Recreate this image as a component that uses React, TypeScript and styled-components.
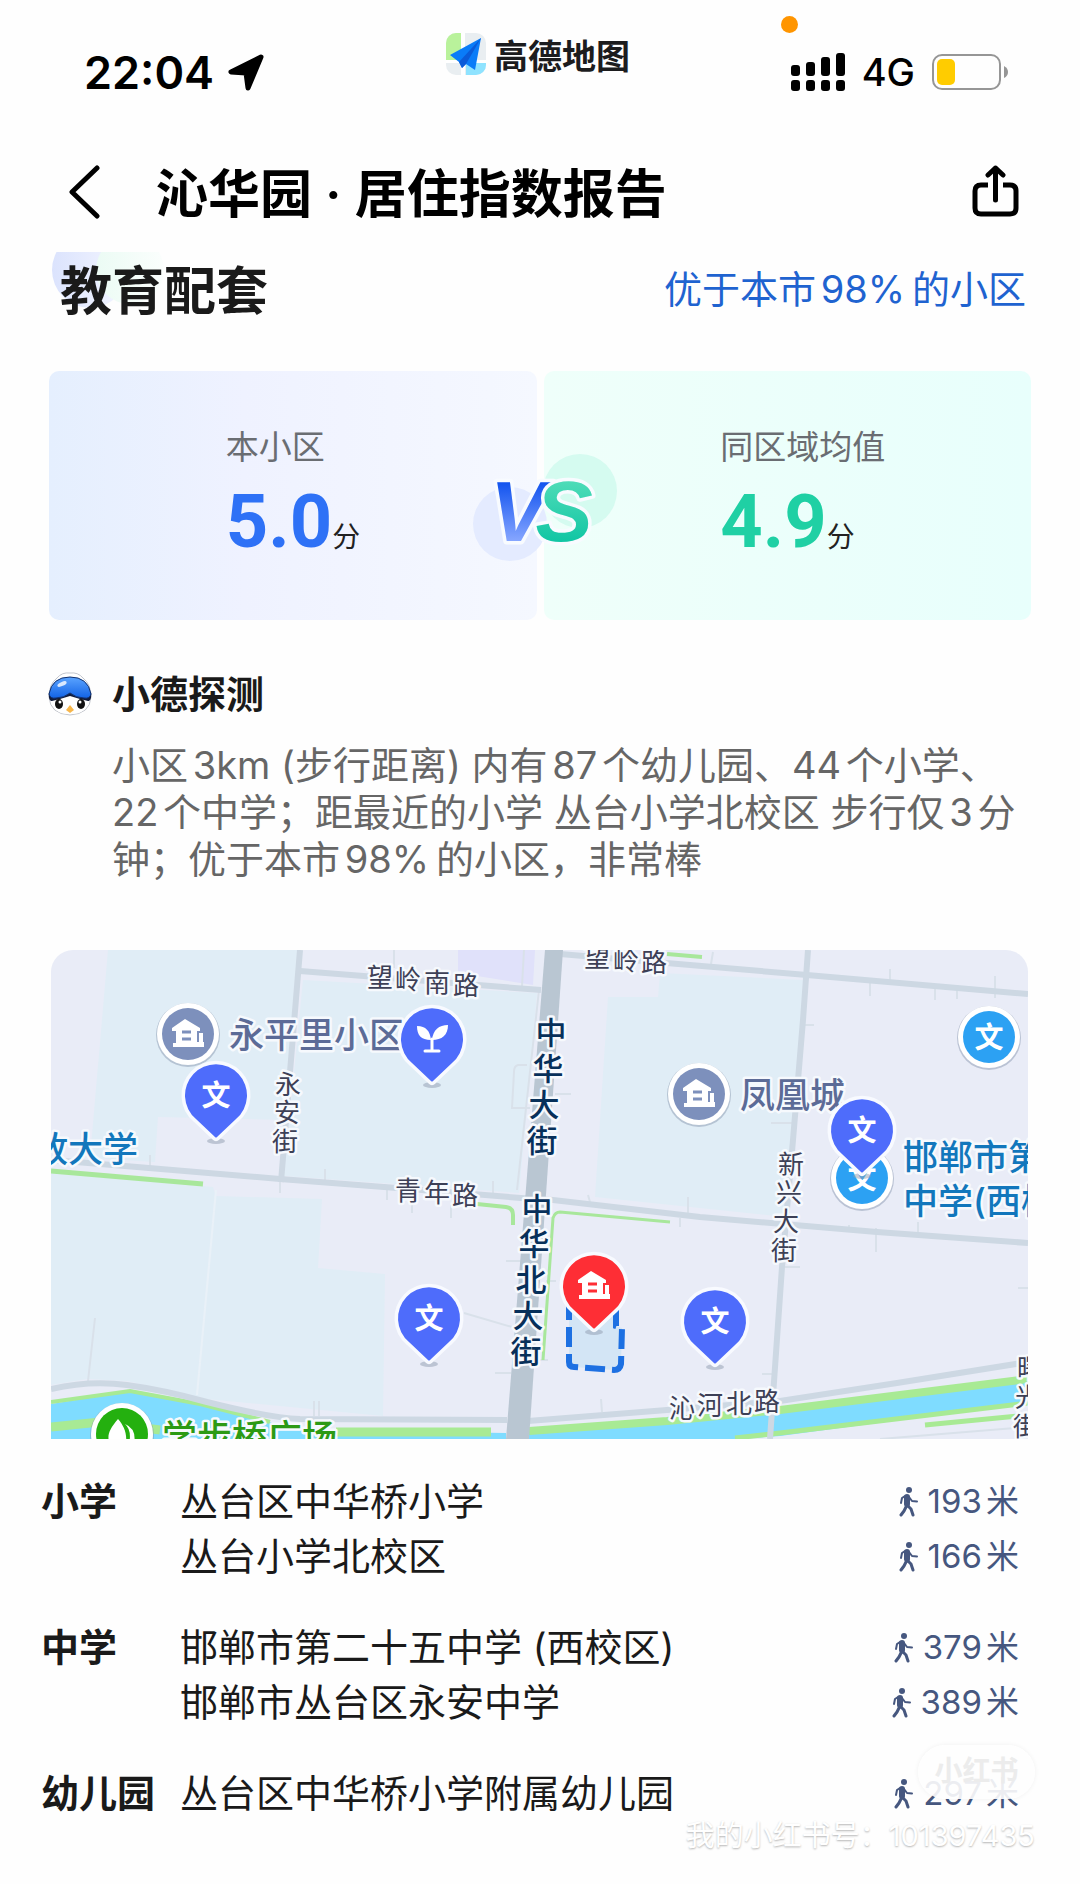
import React from "react";
import styled, { createGlobalStyle } from "styled-components";

const Global = createGlobalStyle`
  * { box-sizing: border-box; }
  body {
    margin: 0;
    background: #fefefe;
    color: #1a1a1a;
    font-family: Inter, "Noto Sans CJK SC", sans-serif;
    text-autospace: normal;
  }
  h1, h2, h3, p, ul { margin: 0; padding: 0; }
  button { font: inherit; color: inherit; border: 0; background: none; padding: 0; cursor: pointer; }
`;

const Page = styled.main`
  position: relative;
  width: 100%;
  padding-bottom: 62px;
  overflow: hidden;
`;

const StatusBar = styled.header`
  position: relative;
  display: grid;
  grid-template-columns: 1fr auto 1fr;
  align-items: center;
  height: 144px;
  padding: 0 72px;
  color: #000;
`;

const Clock = styled.div`
  display: flex;
  align-items: center;
  gap: 14px;
  margin-left: 12px;
  font-size: 45px;
  font-weight: 600;
`;

const Brand = styled.div`
  display: flex;
  align-items: center;
  align-self: start;
  gap: 8px;
  height: 40px;
  margin: 34px 4px 0 0;
  font-size: 34px;
  font-weight: 700;
  color: #1c1c1e;
`;

const Signals = styled.div`
  display: flex;
  align-items: center;
  justify-content: flex-end;
  gap: 17px;
  font-size: 38px;
  font-weight: 500;
`;

const MicDot = styled.span`
  position: absolute;
  top: 16px;
  right: 282px;
  width: 17px;
  height: 17px;
  border-radius: 50%;
  background: #ff9500;
`;

const NavBar = styled.nav`
  display: flex;
  align-items: center;
  height: 98px;
  padding: 0 60px 0 68px;
  color: #000;
`;

const IconButton = styled.button`
  display: flex;
  align-items: center;
`;

const PageTitle = styled.h1`
  flex: 1;
  margin-left: 56px;
  padding-top: 4px;
  font-size: 52px;
  font-weight: 600;
  line-height: 60px;
`;

const SectionHead = styled.div`
  position: relative;
  display: flex;
  align-items: flex-start;
  justify-content: space-between;
  height: 80px;
  margin-top: 10px;
  padding: 0 54px 0 60px;
`;

const HeadGlow = styled.svg`
  position: absolute;
  left: 52px;
  top: 0;
`;

const SectionTitle = styled.h2`
  position: relative;
  font-size: 52px;
  font-weight: 600;
  line-height: 80px;
`;

const RankLink = styled.a`
  font-size: 38px;
  line-height: 74px;
  color: #1f63d0;
  text-decoration: none;
`;

const Versus = styled.section`
  position: relative;
  display: grid;
  grid-template-columns: 1fr 1fr;
  gap: 7px;
  margin: 39px 49px 0;
`;

const ScoreCard = styled.div<{ $side: "own" | "area" }>`
  display: flex;
  justify-content: center;
  height: 249px;
  padding-top: 52px;
  border-radius: 10px;
  background: ${(p) =>
    p.$side === "own"
      ? "linear-gradient(90deg, #e5effe, #eff2ff 40%, #f5f8ff)"
      : "linear-gradient(90deg, #effffa, #e8fffc)"};
`;

const ScoreBody = styled.div`
  width: 134px;
  white-space: nowrap;
`;

const ScoreLabel = styled.div`
  font-size: 33px;
  line-height: 48px;
  color: #6a6d72;
`;

const Score = styled.div<{ $color: string }>`
  display: flex;
  align-items: baseline;
  margin-top: 7px;
  font-family: Roboto, "Noto Sans CJK SC", sans-serif;
  font-size: 74px;
  font-weight: 700;
  line-height: 88px;
  color: ${(p) => p.$color};

  small {
    font-size: 28px;
    font-weight: 400;
    color: #222;
  }
`;

const VersusMark = styled.svg`
  position: absolute;
  left: 50%;
  top: 79px;
  margin-left: -72px;
`;

const Insight = styled.section`
  margin: 48px 48px 0;
`;

const InsightHead = styled.div`
  display: flex;
  align-items: center;
  gap: 20px;
  height: 52px;
`;

const InsightTitle = styled.h3`
  font-size: 38px;
  font-weight: 600;
  line-height: 52px;
`;

const InsightText = styled.p`
  margin: 22px 0 0 64px;
  font-size: 38px;
  line-height: 47px;
  color: #666;
  white-space: nowrap;
`;

const MapFrame = styled.section`
  margin: 67px 52px 0 51px;
  border-radius: 22px 22px 0 0;
  overflow: hidden;
`;

const MapCanvas = styled.svg`
  display: block;
  width: 100%;
  height: auto;
`;

const Schools = styled.section`
  display: grid;
  gap: 36px;
  margin: 35px 61px 0 41px;
`;

const SchoolGroup = styled.div`
  display: grid;
  grid-template-columns: 139px 1fr;
  font-size: 38px;
  line-height: 55px;
`;

const GroupName = styled.h3`
  font-size: 38px;
  font-weight: 600;
  line-height: 55px;
  white-space: nowrap;
`;

const SchoolList = styled.ul`
  list-style: none;
`;

const SchoolRow = styled.li`
  display: flex;
  justify-content: space-between;
`;

const Distance = styled.span`
  display: flex;
  align-items: center;
  gap: 10px;
  font-size: 33px;
  color: #46577f;
`;

const Stamp = styled.div`
  position: absolute;
  right: 45px;
  top: 1745px;
  width: 117px;
  height: 54px;
  border-radius: 27px;
  background: rgba(254, 254, 254, 0.9);
  box-shadow: 0 0 5px rgba(0, 0, 0, 0.06);
  color: #ececec;
  font-size: 28px;
  font-weight: 700;
  line-height: 52px;
  text-align: center;
`;

const StampId = styled.div`
  position: absolute;
  right: 45px;
  top: 1816px;
  font-size: 29px;
  line-height: 40px;
  color: #fff;
  text-shadow: 0 1px 2px #b4b4b4;
  white-space: nowrap;
`;

const MapText = styled.text<{ $size: number; $color: string; $weight?: number }>`
  font-size: ${(p) => p.$size}px;
  font-weight: ${(p) => p.$weight ?? 400};
  fill: ${(p) => p.$color};
  stroke: #f6f9fd;
  stroke-width: 5px;
  stroke-linejoin: round;
  paint-order: stroke;
`;

const StreetText = styled(MapText)`
  text-anchor: middle;
`;

const PinGlyph = styled.text`
  font-size: 29px;
  font-weight: 700;
  fill: #fff;
  text-anchor: middle;
`;

type Point = [number, number];

/* Street names are set one character per point, along the line of the road. */
function Street({ text, at, major }: { text: string; at: Point[]; major?: boolean }) {
  const drop = major ? 11 : 9;
  return (
    <StreetText
      $size={major ? 31 : 26}
      $weight={major ? 500 : 400}
      $color={major ? "#07305a" : "#3d4056"}
      x={at.map((p) => p[0]).join(" ")}
      y={at.map((p) => p[1] + drop).join(" ")}
    >
      {text}
    </StreetText>
  );
}

function House() {
  return (
    <g fill="#fff">
      <path d="M-3-15-16-6v3h4v12h-3v4h31V8h-1v-9h-4v9h-2V-3h3v-3Z" />
      <path d="M-6-2H3M-6 5H3" stroke="currentColor" strokeWidth="3" />
    </g>
  );
}

function Sprout() {
  return (
    <g fill="#fff">
      <path d="M-1 1C-11 1-15-4-15-13-6-13-2-8-1 1ZM0 1C1-9 7-14 16-14 16-4 10 1 0 1Z" />
      <path d="M0 0v11M-7 12H7" stroke="#fff" strokeWidth="3" strokeLinecap="round" />
    </g>
  );
}

function Pin({ x, y, color, kind }: { x: number; y: number; color: string; kind: "school" | "sprout" | "house" }) {
  return (
    <g transform={`translate(${x} ${y})`} color={color}>
      <ellipse cy="46" rx="9" ry="3" fill="#8f9bb0" opacity=".5" />
      <path
        d="M-1 42-20 24A31 31 0 1 1 20 24L1 42Q0 43-1 42Z"
        fill={color}
        stroke="#f8faff"
        strokeWidth="7"
        strokeLinejoin="round"
        paintOrder="stroke"
      />
      {kind === "school" && <PinGlyph y="11">文</PinGlyph>}
      {kind === "sprout" && <Sprout />}
      {kind === "house" && <House />}
    </g>
  );
}

function Place({ x, y, color, kind }: { x: number; y: number; color: string; kind: "school" | "house" | "park" }) {
  return (
    <g transform={`translate(${x} ${y})`} color={color}>
      <circle r="32" cy="1" fill="#8090a8" opacity=".45" />
      <circle r="31" fill="#fff" />
      <circle r="26" fill={color} />
      {kind === "school" && <PinGlyph y="11">文</PinGlyph>}
      {kind === "house" && <House />}
      {kind === "park" && <path d="M-4-15C-16-1-16 6-8 16H2C7 3 3-7-4-15ZM3-10Q11-3 6 14L12 10Q15-5 3-10Z" fill="#fff" />}
    </g>
  );
}

function AreaMap() {
  return (
    <MapCanvas viewBox="51 950 977 489" role="img" aria-label="周边学校地图">
      <rect x="51" y="950" width="977" height="489" fill="#e9ecf7" />
      <g fill="#e0edf6">
        <path d="M108 950H297L290 1120 158 1117 155 1162 90 1158Z" />
        <path d="M303 980 537 993 519 1193 284 1176Z" />
        <path d="M51 1173 213 1187 216 1196 322 1199 318 1268 385 1274 383 1416 206 1399 127 1381 87 1379 51 1385Z" />
        <path d="M660 973 803 980 793 1145 785 1217 595 1197 608 997 658 997Z" />
      </g>
      <path d="M458 950h77l-2 35-75-12Z" fill="#e0e1fa" />
      <path d="M216 1190 197 1395" stroke="#e9f1f8" strokeWidth="2" />

      <path d="M51 1404 130 1391 210 1407 300 1430 506 1433V1439H51Z" fill="#7fdcff" />
      <path d="M51 1402 130 1391 200 1404 270 1422" fill="none" stroke="#a8ea94" strokeWidth="4" />
      <path d="M51 1427 100 1422 160 1430" fill="none" stroke="#a8ea94" strokeWidth="9" />
      <path d="M336 1432H491" stroke="#a8ea94" strokeWidth="9" />
      <path d="M529 1432 667 1424 780 1411 1015 1383 1028 1381V1403L780 1436 740 1439H529Z" fill="#7fdcff" />
      <path d="M529 1431 667 1421 780 1410 1028 1379" fill="none" stroke="#a8ea94" strokeWidth="8" />
      <path d="M735 1438 780 1433 1028 1403" fill="none" stroke="#a8ea94" strokeWidth="5" />
      <path d="M925 1425 1028 1415" stroke="#a8ea94" strokeWidth="5" />

      <g fill="none" stroke="#d9e1ea" strokeWidth="2">
        <path d="M394 950v18M524 950l-2 36M539 990l-22 200M150 1155v12M325 1169v12M387 1190v10M412 1203v10M451 1205v13M493 1181v14M95 1318 88 1381M506 1261h16M495 1373h16M464 1313 512 1327M314 1401v15M319 1401v15M527 1065h-9q-4 1-4 7l-2 36h18M280 1179v14" />
        <path d="M713 952l-2 12M890 969v11M870 983v13M995 976v22M935 989v11M957 990v9M804 1025h10M771 1123h21M688 1197v16M680 1218v9M588 1195l2 7M849 1225v7M876 1228v24M918 1222v12M785 1267h15M762 1374h12M601 1399l1 13M1018 1288h10M555 1094h16M546 1281h10M534 1360h14M880 1439 1028 1427" />
      </g>
      <g fill="none" stroke="#cdd8e3" strokeWidth="6">
        <path d="M51 1160 137 1167 280 1179 397 1188 521 1198 553 1200 700 1217 877 1232 1028 1243" />
        <path d="M300 950 281 1182" />
        <path d="M300 971 541 990" />
        <path d="M560 954 807 975 1028 994" />
        <path d="M808 950 803 1020 793 1140 782 1267 770 1439" />
        <path d="M528 1421 667 1410 780 1401 897 1383 1028 1362" />
        <path d="M51 1389Q90 1380 127 1385T207 1402Q270 1418 300 1419L507 1420" />
      </g>
      <path d="M545 950H563L529 1439H506Z" fill="#b9c6d2" />

      <g fill="none" stroke="#a8e79b">
        <path d="M51 1171 203 1184" strokeWidth="5" />
        <path d="M477 1204 506 1207Q513 1208 513 1215V1225" strokeWidth="4" />
        <path d="M670 1222 560 1212Q555 1212 553 1218L543 1360" strokeWidth="3" />
        <path d="M667 954 702 957M590 951h12" strokeWidth="4" />
      </g>

      <path
        d="M569 1300V1362Q569 1367 574 1367L614 1370Q620 1370 621 1364L622 1328 616 1326V1300Z"
        fill="#d3e5f5"
        stroke="#1d70e2"
        strokeWidth="6"
        strokeDasharray="20 7"
      />

      <Street text="望岭南路" at={[[380, 978], [408, 980], [437, 983], [466, 986]]} />
      <Street text="望岭路" at={[[597, 958], [626, 961], [654, 963]]} />
      <Street text="永安街" at={[[288, 1085], [287, 1113], [285, 1142]]} />
      <Street text="青年路" at={[[408, 1191], [437, 1193], [465, 1196]]} />
      <Street text="新兴大街" at={[[791, 1165], [789, 1193], [786, 1222], [784, 1251]]} />
      <Street text="沁河北路" at={[[682, 1409], [710, 1406], [739, 1404], [767, 1402]]} />
      <Street text="曙光街" at={[[1030, 1369], [1028, 1398], [1026, 1427]]} />
      <Street major text="中华大街" at={[[551, 1033], [548, 1069], [544, 1105], [542, 1141]]} />
      <Street major text="中华北大街" at={[[537, 1209], [534, 1244], [531, 1280], [528, 1316], [526, 1352]]} />

      <MapText $size={35} $weight={500} $color="#5c6b97" x="229" y="1048">永平里小区</MapText>
      <MapText $size={35} $weight={500} $color="#5c6b97" x="740" y="1108">凤凰城</MapText>
      <MapText $size={35} $weight={500} $color="#1277bc" x="33" y="1162">放大学</MapText>
      <MapText $size={35} $weight={500} $color="#1277bc" x="903" y="1170">邯郸市第</MapText>
      <MapText $size={35} $weight={500} $color="#1277bc" x="903" y="1214">中学(西校</MapText>
      <MapText $size={35} $weight={500} $color="#2c9a14" x="162" y="1450">学步桥广场</MapText>

      <Place kind="house" color="#7d90bc" x={188} y={1034} />
      <Place kind="house" color="#7d90bc" x={699} y={1094} />
      <Place kind="school" color="#2ca1f3" x={989} y={1037} />
      <Place kind="school" color="#2ca1f3" x={862} y={1178} />
      <Place kind="park" color="#24b00f" x={122} y={1434} />
      <Pin kind="school" color="#4e6cfb" x={216} y={1095} />
      <Pin kind="sprout" color="#4e6cfb" x={432} y={1039} />
      <Pin kind="school" color="#4e6cfb" x={429} y={1318} />
      <Pin kind="school" color="#4e6cfb" x={862} y={1130} />
      <Pin kind="school" color="#4e6cfb" x={715} y={1321} />
      <Pin kind="house" color="#fe2e35" x={594} y={1286} />
    </MapCanvas>
  );
}

function Walker() {
  return (
    <svg width="19" height="30" viewBox="0 0 19 30" aria-hidden="true">
      <circle cx="10" cy="3" r="3" fill="currentColor" />
      <g fill="none" stroke="currentColor" strokeLinecap="round" strokeLinejoin="round">
        <path d="M8 10 8 17" strokeWidth="6" />
        <path d="M6 9 3 11 2 16M10 10l3 4 5 .5" strokeWidth="2" />
        <path d="M8 18l4 4 2 6M7 20 5 24 2 28" strokeWidth="3" />
      </g>
    </svg>
  );
}

function BrandIcon() {
  return (
    <svg width="40" height="42" viewBox="0 0 40 42" aria-hidden="true">
      <clipPath id="tile"><rect width="40" height="42" rx="10" /></clipPath>
      <g clipPath="url(#tile)">
        <rect width="40" height="42" fill="#e9eef1" />
        <path d="M0 0h15v28H0Z" fill="#b9f29b" />
        <path d="M20 30h20v12H20Z" fill="#8fe3ff" />
        <path d="M15 0h4v42h-4ZM0 27h40v3H0Z" fill="#fff" />
      </g>
      <path d="M35 5 4 22 13 29 16 35 20 31 29 37Z" fill="#0a7cf8" />
      <path d="M35 5 13 29 16 35 20 31Z" fill="#0a5bd8" />
    </svg>
  );
}

function Mascot() {
  return (
    <svg width="44" height="44" viewBox="0 0 44 44" aria-hidden="true">
      <defs>
        <linearGradient id="cap" x2="0" y2="1">
          <stop stopColor="#5ba4ff" />
          <stop offset="1" stopColor="#1263e6" />
        </linearGradient>
      </defs>
      <path d="M22 1Q30 0 35 6 43 12 43 25 42 42 22 43 2 42 1 25 1 12 9 6 14 0 22 1Z" fill="#fff" stroke="#c3c6cd" />
      <path d="M1 20Q0 27 3 29L14 29 22 25 30 29 41 29Q44 27 43 20Z" fill="#111c3c" />
      <path d="M4 29 12 27 22 24 32 27 40 29Q39 42 22 42T4 29Z" fill="#fff" />
      <path d="M1 22Q4 5 22 5T43 22Q42 27 36 26 28 26 22 21 16 26 8 26 2 27 1 22Z" fill="url(#cap)" stroke="#12316e" strokeWidth="1" />
      <ellipse cx="14" cy="12" rx="5" ry="2" fill="#fff" opacity=".8" transform="rotate(-25 14 12)" />
      <ellipse cx="11" cy="32" rx="4" ry="5" fill="#111" />
      <ellipse cx="33" cy="32" rx="4" ry="5" fill="#111" />
      <circle cx="12" cy="30" r="1.500" fill="#fff" />
      <circle cx="32" cy="30" r="1.500" fill="#fff" />
      <path d="M22 33 26 38 22 41 18 38Z" fill="#f7b64a" />
    </svg>
  );
}

const groups = [
  { name: "小学", schools: [["丛台区中华桥小学", 193], ["丛台小学北校区", 166]] },
  { name: "中学", schools: [["邯郸市第二十五中学 (西校区)", 379], ["邯郸市丛台区永安中学", 389]] },
  { name: "幼儿园", schools: [["丛台区中华桥小学附属幼儿园", 297]] },
];

export default function App() {
  return (
    <>
      <Global />
      <Page>
        <StatusBar>
          <MicDot />
          <Clock>
            22:04
            <svg width="37" height="37" viewBox="0 0 37 37" aria-hidden="true">
              <path d="M33 3 3 18 18 19 20 34Z" stroke="#000" strokeWidth="5" strokeLinejoin="round" />
            </svg>
          </Clock>
          <Brand>
            <BrandIcon />
            高德地图
          </Brand>
          <Signals>
            <svg width="54" height="38" viewBox="0 0 54 38" aria-hidden="true">
              <rect y="12" width="9" height="11" rx="3" />
              <rect x="15" y="9" width="9" height="14" rx="3" />
              <rect x="30" y="4" width="9" height="19" rx="3" />
              <rect x="45" width="9" height="23" rx="3" />
              <rect y="27" width="9" height="11" rx="3" />
              <rect x="15" y="27" width="9" height="11" rx="3" />
              <rect x="30" y="27" width="9" height="11" rx="3" />
              <rect x="45" y="27" width="9" height="11" rx="3" />
            </svg>
            4G
            <svg width="76" height="36" viewBox="0 0 76 36" aria-hidden="true">
              <rect x="1" y="1" width="67" height="34" rx="9" fill="none" stroke="#969696" strokeWidth="2" />
              <rect x="5" y="5" width="18" height="26" rx="5" fill="#ffcc00" />
              <path d="M72 12q4 2 4 6t-4 6Z" fill="#969696" />
            </svg>
          </Signals>
        </StatusBar>

        <NavBar>
          <IconButton aria-label="返回">
            <svg width="32" height="56" viewBox="0 0 32 56" fill="none" stroke="#000" strokeWidth="5" strokeLinecap="round" strokeLinejoin="round">
              <path d="M29 3 4 27 29 51" />
            </svg>
          </IconButton>
          <PageTitle>沁华园 · 居住指数报告</PageTitle>
          <IconButton aria-label="分享">
            <svg width="49" height="56" viewBox="0 0 49 56" fill="none" stroke="#000" strokeWidth="5" strokeLinecap="round" strokeLinejoin="round">
              <path d="M17 20H10Q4 20 4 26V43Q4 49 10 49H39Q45 49 45 43V26Q45 20 39 20H32" strokeLinecap="butt" />
              <path d="M24.500 35V3M17 10 24.500 3 32 10" />
            </svg>
          </IconButton>
        </NavBar>

        <SectionHead>
          <HeadGlow width="112" height="60" viewBox="0 0 112 60" aria-hidden="true">
            <defs>
              <linearGradient id="glowBlue">
                <stop stopColor="#dbe3fd" />
                <stop offset="1" stopColor="#f4f6ff" />
              </linearGradient>
              <linearGradient id="glowGreen">
                <stop stopColor="#ebfbf4" />
                <stop offset="1" stopColor="#fbfefd" />
              </linearGradient>
            </defs>
            <circle cx="38" cy="18" r="38" fill="url(#glowBlue)" />
            <circle cx="78" cy="18" r="34" fill="url(#glowGreen)" />
          </HeadGlow>
          <SectionTitle>教育配套</SectionTitle>
          <RankLink href="#rank">优于本市98%&#8201;的小区</RankLink>
        </SectionHead>

        <Versus>
          <ScoreCard $side="own">
            <ScoreBody>
              <ScoreLabel>本小区</ScoreLabel>
              <Score $color="#2e71f6">5.0<small>分</small></Score>
            </ScoreBody>
          </ScoreCard>
          <ScoreCard $side="area">
            <ScoreBody>
              <ScoreLabel>同区域均值</ScoreLabel>
              <Score $color="#1fd0a4">4.9<small>分</small></Score>
            </ScoreBody>
          </ScoreCard>
          <VersusMark width="152" height="116" viewBox="0 0 152 116" role="img" aria-label="VS">
            <defs>
              <linearGradient id="vFill" gradientUnits="userSpaceOnUse" x1="0" y1="30" x2="0" y2="91">
                <stop stopColor="#0d50ee" />
                <stop offset="1" stopColor="#86a6ff" />
              </linearGradient>
              <linearGradient id="sFill" gradientUnits="userSpaceOnUse" x1="0" y1="30" x2="0" y2="91">
                <stop stopColor="#4fdcb8" />
                <stop offset="1" stopColor="#12c6a4" />
              </linearGradient>
            </defs>
            <circle cx="42" cy="74" r="37" fill="#e4ebff" />
            <circle cx="112" cy="41" r="37" fill="#d5fbf0" />
            <text x="22" y="91" fontFamily="Liberation Sans" fontWeight="700" fontStyle="italic" fontSize="86" stroke="#f8fbff" strokeWidth="7" paintOrder="stroke" strokeLinejoin="round">
              <tspan fill="url(#vFill)">V</tspan>
              <tspan dx="-12" fill="url(#sFill)">S</tspan>
            </text>
          </VersusMark>
        </Versus>

        <Insight>
          <InsightHead>
            <Mascot />
            <InsightTitle>小德探测</InsightTitle>
          </InsightHead>
          <InsightText>
            小区3km (步行距离) 内有87个幼儿园、44个小学、
            <br />
            22个中学；距最近的小学 丛台小学北校区 步行仅3分
            <br />
            钟；优于本市98%&#8201;的小区，非常棒
          </InsightText>
        </Insight>

        <MapFrame>
          <AreaMap />
        </MapFrame>

        <Schools>
          {groups.map((group) => (
            <SchoolGroup key={group.name}>
              <GroupName>{group.name}</GroupName>
              <SchoolList>
                {group.schools.map(([name, metres]) => (
                  <SchoolRow key={name}>
                    <span>{name}</span>
                    <Distance>
                      <Walker />
                      <span>{`${metres}米`}</span>
                    </Distance>
                  </SchoolRow>
                ))}
              </SchoolList>
            </SchoolGroup>
          ))}
        </Schools>

        <Stamp>小红书</Stamp>
        <StampId>我的小红书号：101397435</StampId>
      </Page>
    </>
  );
}
